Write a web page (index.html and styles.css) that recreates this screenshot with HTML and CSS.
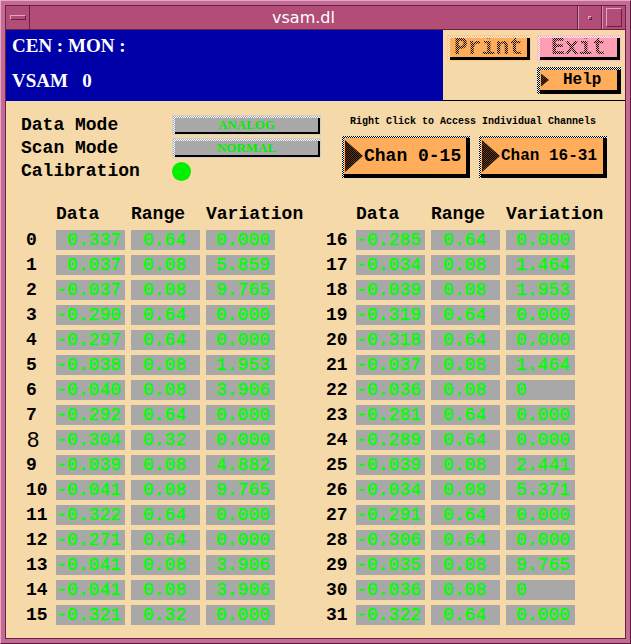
FILE: index.html
```html
<!DOCTYPE html>
<html>
<head>
<meta charset="utf-8">
<title>vsam.dl</title>
<link rel="stylesheet" href="styles.css">
</head>
<body>
<div class="window">
  <div class="frame-inner">
    <div class="titlebar">
      <div class="tb-btn tb-menu"><span class="dash"></span></div>
      <div class="tb-title">vsam.dl</div>
      <div class="tb-btn tb-min"><span class="dot"></span></div>
      <div class="tb-btn tb-max"><span class="sq"></span></div>
    </div>
    <div class="content">
      <div class="top">
        <div class="banner">
          <div class="banner-line">CEN : MON :</div>
          <div class="banner-line vsam">VSAM   0</div>
        </div>
        <div class="actions">
          <div class="pbtn print"><div class="pface"><span class="dither">Print</span></div></div>
          <div class="pbtn exit"><div class="pface"><span class="dither">Exit</span></div></div>
          <div class="hbtn help"><div class="hface"><span class="tri tri-small"></span><span class="help-text">Help</span></div></div>
        </div>
      </div>

      <div class="controls">
        <div class="modes">
          <div class="mlabel">Data Mode</div>
          <div class="gbox"><div class="gface">ANALOG</div></div>
          <div class="mlabel">Scan Mode</div>
          <div class="gbox"><div class="gface">NORMAL</div></div>
          <div class="mlabel">Calibration</div>
          <div class="led-cell"><span class="led"></span></div>
        </div>
        <div class="chans">
          <div class="note">Right Click to Access Individual Channels</div>
          <div class="chan-row">
            <div class="hbtn chan"><div class="hface"><span class="tri tri-big"></span><span class="chan-text big">Chan 0-15</span></div></div>
            <div class="hbtn chan"><div class="hface"><span class="tri tri-big"></span><span class="chan-text small">Chan 16-31</span></div></div>
          </div>
        </div>
      </div>

      <div class="table">
        <div class="half">
          <div></div><div class="th">Data</div><div class="th">Range</div><div class="th">Variation</div>
          <div class="idx">0</div><div class="v d">0.337</div><div class="v r">0.64</div><div class="v w">0.000</div>
          <div class="idx">1</div><div class="v d">0.037</div><div class="v r">0.08</div><div class="v w">5.859</div>
          <div class="idx">2</div><div class="v d">-0.037</div><div class="v r">0.08</div><div class="v w">9.765</div>
          <div class="idx">3</div><div class="v d">-0.290</div><div class="v r">0.64</div><div class="v w">0.000</div>
          <div class="idx">4</div><div class="v d">-0.297</div><div class="v r">0.64</div><div class="v w">0.000</div>
          <div class="idx">5</div><div class="v d">-0.038</div><div class="v r">0.08</div><div class="v w">1.953</div>
          <div class="idx">6</div><div class="v d">-0.040</div><div class="v r">0.08</div><div class="v w">3.906</div>
          <div class="idx">7</div><div class="v d">-0.292</div><div class="v r">0.64</div><div class="v w">0.000</div>
          <div class="idx idx-sans">8</div><div class="v d">-0.304</div><div class="v r">0.32</div><div class="v w">0.000</div>
          <div class="idx">9</div><div class="v d">-0.039</div><div class="v r">0.08</div><div class="v w">4.882</div>
          <div class="idx">10</div><div class="v d">-0.041</div><div class="v r">0.08</div><div class="v w">9.765</div>
          <div class="idx">11</div><div class="v d">-0.322</div><div class="v r">0.64</div><div class="v w">0.000</div>
          <div class="idx">12</div><div class="v d">-0.271</div><div class="v r">0.64</div><div class="v w">0.000</div>
          <div class="idx">13</div><div class="v d">-0.041</div><div class="v r">0.08</div><div class="v w">3.906</div>
          <div class="idx">14</div><div class="v d">-0.041</div><div class="v r">0.08</div><div class="v w">3.906</div>
          <div class="idx">15</div><div class="v d">-0.321</div><div class="v r">0.32</div><div class="v w">0.000</div>
        </div>
        <div class="half">
          <div></div><div class="th">Data</div><div class="th">Range</div><div class="th">Variation</div>
          <div class="idx">16</div><div class="v d">-0.285</div><div class="v r">0.64</div><div class="v w">0.000</div>
          <div class="idx">17</div><div class="v d">-0.034</div><div class="v r">0.08</div><div class="v w">1.464</div>
          <div class="idx">18</div><div class="v d">-0.039</div><div class="v r">0.08</div><div class="v w">1.953</div>
          <div class="idx">19</div><div class="v d">-0.319</div><div class="v r">0.64</div><div class="v w">0.000</div>
          <div class="idx">20</div><div class="v d">-0.318</div><div class="v r">0.64</div><div class="v w">0.000</div>
          <div class="idx">21</div><div class="v d">-0.037</div><div class="v r">0.08</div><div class="v w">1.464</div>
          <div class="idx">22</div><div class="v d">-0.036</div><div class="v r">0.08</div><div class="v w">0</div>
          <div class="idx">23</div><div class="v d">-0.281</div><div class="v r">0.64</div><div class="v w">0.000</div>
          <div class="idx">24</div><div class="v d">-0.289</div><div class="v r">0.64</div><div class="v w">0.000</div>
          <div class="idx">25</div><div class="v d">-0.039</div><div class="v r">0.08</div><div class="v w">2.441</div>
          <div class="idx">26</div><div class="v d">-0.034</div><div class="v r">0.08</div><div class="v w">5.371</div>
          <div class="idx">27</div><div class="v d">-0.291</div><div class="v r">0.64</div><div class="v w">0.000</div>
          <div class="idx">28</div><div class="v d">-0.306</div><div class="v r">0.64</div><div class="v w">0.000</div>
          <div class="idx">29</div><div class="v d">-0.035</div><div class="v r">0.08</div><div class="v w">9.765</div>
          <div class="idx">30</div><div class="v d">-0.036</div><div class="v r">0.08</div><div class="v w">0</div>
          <div class="idx">31</div><div class="v d">-0.322</div><div class="v r">0.64</div><div class="v w">0.000</div>
        </div>
      </div>
    </div>
  </div>
</div>
</body>
</html>
```
FILE: styles.css
```css
* { box-sizing: border-box; margin: 0; padding: 0; }
html, body { width: 631px; height: 644px; overflow: hidden; }
body { background: #c46b95; font-family: "Liberation Mono", monospace; }

.window {
  width: 631px; height: 644px;
  padding: 4px;
  background: #c46b95;
  border-top: 1px solid #e8a9c6;
  border-left: 1px solid #e8a9c6;
  border-right: 1px solid #5e1a3a;
  border-bottom: 1px solid #5e1a3a;
}
.frame-inner {
  height: 100%;
  border: 1px solid #6a2045;
  display: flex; flex-direction: column;
}

/* title bar */
.titlebar {
  height: 24px; flex: none;
  display: flex;
  background: #b24d78;
  border-bottom: 1px solid #6a2045;
}
.tb-btn { width: 24px; flex: none; display: flex; align-items: center; justify-content: center; }
.tb-menu { border-right: 1px solid #6a2045; }
.tb-min { border-left: 1px solid #6a2045; box-shadow: inset 1px 0 0 #d98db0; }
.tb-max { border-left: 1px solid #6a2045; box-shadow: inset 1px 0 0 #d98db0; }
.dash {
  width: 16px; height: 5px; background: #b24d78;
  border-top: 1px solid #e6a3c3; border-left: 1px solid #e6a3c3;
  border-bottom: 1px solid #6a2045; border-right: 1px solid #6a2045;
}
.dot {
  width: 4px; height: 4px; background: #b24d78;
  border-top: 1px solid #e6a3c3; border-left: 1px solid #e6a3c3;
  border-bottom: 1px solid #6a2045; border-right: 1px solid #6a2045;
}
.sq {
  width: 16px; height: 19px; background: #b24d78;
  border-top: 1px solid #e6a3c3; border-left: 1px solid #e6a3c3;
  border-bottom: 1px solid #6a2045; border-right: 1px solid #6a2045;
}
.tb-title {
  flex: 1;
  text-align: center;
  color: #fff;
  font: 16px/23px "DejaVu Sans", sans-serif;
}

/* content */
.content {
  flex: 1;
  background: #f5d9a8;
  display: flex; flex-direction: column;
}
.top { height: 71px; display: flex; flex: none; }
.banner {
  width: 437px; height: 71px;
  background: #0000a8;
  color: #fff;
  padding: 5px 0 0 6px;
  font: bold 19px/22px "Liberation Serif", serif;
  display: flex; flex-direction: column; gap: 13px;
}
.vsam { white-space: pre; }
.actions {
  flex: 1;
  border-bottom: 1px solid #000;
  padding: 5px 0 0 4px;
  display: grid;
  grid-template-columns: 84px 84px;
  grid-template-rows: 26px 27px;
  column-gap: 6px; row-gap: 6px;
}
.pbtn {
  padding: 2px 0 0 2px;
}
.print {
  border: 1px solid #ffc98a;
  background: repeating-conic-gradient(#fff 0 25%, #ffad5a 0 50%) 0 0/2px 2px;
}
.exit {
  border: 1px solid #ffbccb;
  background: repeating-conic-gradient(#fff 0 25%, #ff9db2 0 50%) 0 0/2px 2px;
}
.pface {
  height: 100%;
  border-right: 3px solid #000; border-bottom: 3px solid #000;
  display: flex; align-items: center; justify-content: center;
}
.print .pface { background: #ffad5a; }
.exit .pface { background: #ff9db2; }
.dither {
  font: bold 23px/20px "Liberation Mono", monospace;
  background: repeating-conic-gradient(#000 0 25%, transparent 0 50%) 0 0/2px 2px;
  -webkit-background-clip: text; background-clip: text;
  color: transparent;
}
.help { grid-column: 2; grid-row: 2; }
.hbtn {
  padding: 3px 0 0 3px;
  background: repeating-conic-gradient(#000 0 25%, #fff 0 50%) 0 0/2px 2px;
}
.hface {
  height: 100%;
  background: #ffad5a;
  border-right: 4px solid #000; border-bottom: 4px solid #000;
  display: flex; align-items: center;
}
.tri {
  flex: none;
  clip-path: polygon(0 0, 100% 50%, 0 100%);
  background: repeating-conic-gradient(#000 0 25%, #6b3a10 0 50%) 0 0/2px 2px;
}
.tri-small { width: 8px; height: 13px; margin-left: 1px; }
.help-text { font: bold 16px/18px "Liberation Mono", monospace; margin-left: 14px; color: #000; }

/* controls */
.controls { display: flex; padding: 12px 0 0 15px; height: 81px; flex: none; }
.modes {
  display: grid;
  grid-template-columns: 151px 150px;
  grid-template-rows: repeat(3, 23px);
  align-items: center;
}
.mlabel { font: bold 18px/20px "Liberation Mono", monospace; color: #000; }
.gbox {
  width: 149px; height: 20px;
  border: 1px solid #cfcfcf;
  padding: 2px 0 0 2px;
  background: repeating-conic-gradient(#fff 0 25%, #a8a8a8 0 50%) 0 0/2px 2px;
}
.gface {
  height: 100%;
  background: #a8a8a8;
  border-right: 2px solid #000; border-bottom: 2px solid #000;
  color: #00f000;
  text-align: center;
  font: bold 13px/14px "Liberation Serif", serif;
}
.led-cell { display: flex; align-items: center; }
.led { width: 19px; height: 19px; border-radius: 50%; background: #00f000; margin-top: 2px; }

.chans { margin-left: 20px; }
.note { font: bold 10px/18px "Liberation Mono", monospace; padding-left: 8px; color: #000; }
.chan-row { display: flex; gap: 9px; margin-top: 5px; }
.chan { width: 128px; height: 42px; padding: 2px 0 0 2px; }
.tri-big { width: 18px; height: 32px; margin-left: 1px; }
.chan-text { color: #000; white-space: pre; }
.chan-text.big { font: bold 18px/20px "Liberation Mono", monospace; margin-left: 1px; }
.chan-text.small { font: bold 16px/20px "Liberation Mono", monospace; margin-left: 1px; }

/* table */
.table { display: flex; gap: 51px; padding-left: 20px; margin-top: 22px; }
.half {
  display: grid;
  grid-template-columns: 24px 69px 69px 69px;
  grid-template-rows: 21px repeat(16, 20px);
  column-gap: 6px; row-gap: 5px;
}
.th { font: bold 18px/20px "Liberation Mono", monospace; color: #000; }
.idx { font: bold 18px/20px "Liberation Mono", monospace; color: #000; }
.idx-sans { font: 22px/20px "Liberation Sans", sans-serif; padding-left: 1px; }
.v {
  background: #a8a8a8;
  color: #00ff00;
  font: 18px/20px "Liberation Mono", monospace;
  -webkit-text-stroke: 0.4px #00ff00;
  white-space: pre;
}
.v.d { text-align: right; padding-right: 4px; }
.v.r { padding-left: 12px; }
.v.w { padding-left: 10px; }
```
